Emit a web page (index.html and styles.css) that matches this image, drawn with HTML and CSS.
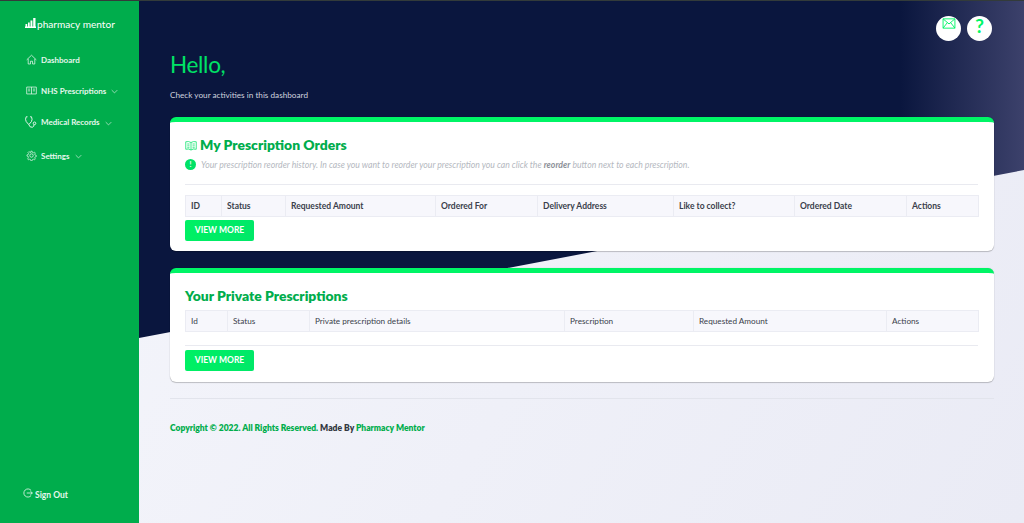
FILE: index.html
```html
<!DOCTYPE html>
<html lang="en">
<head>
<meta charset="utf-8">
<title>Pharmacy Mentor</title>
<link rel="stylesheet" href="styles.css">
</head>
<body>
<div class="app">
  <aside class="sidebar">
    <div class="logo">
      <svg class="logo-mark" viewBox="0 0 11 10"><path d="M0 8.500h11V10H0zM0.500 6h1.700v2.500H0.500zM3 4.500h1.700v4H3zM5.500 2.500h1.900v6H5.500zM8.200 0l2.300-.0V8.500H8.200z" fill="#fff"/></svg>
      <span>pharmacy mentor</span>
    </div>
    <nav class="nav">
      <a class="nav-item">
        <svg class="ico" viewBox="0 0 16 16"><path d="M1 8.500 8 1.800l7 6.700M3.200 7v7.500h3.300v-4h3v4h3.300V7"/></svg>
        <span>Dashboard</span>
      </a>
      <a class="nav-item">
        <svg class="ico" viewBox="0 0 16 16"><path d="M1 3h14v10H1zM8 3v10M3 6h3M3 8.500h3M10 6h3M10 8.500h3"/></svg>
        <span>NHS Prescriptions</span>
        <svg class="chev" viewBox="0 0 10 6"><path d="m1 1 4 4 4-4"/></svg>
      </a>
      <a class="nav-item">
        <svg class="ico ico-lg" viewBox="0 0 16 16"><path d="M4 2H2.500Q1 5 2.500 7.500L5.500 11 8.500 7.500Q10 5 8.500 2H7M5.500 11q1 3.500 4 3 2-.5 2-3"/><circle cx="12" cy="9.500" r="1.500"/></svg>
        <span>Medical Records</span>
        <svg class="chev chev-low" viewBox="0 0 10 6"><path d="m1 1 4 4 4-4"/></svg>
      </a>
      <a class="nav-item nav-item-last">
        <svg class="ico" viewBox="0 0 16 16"><circle cx="8" cy="8" r="2.500"/><path d="M7 1h2l.5 2 1.500.6 1.800-1 1.400 1.400-1 1.800.6 1.500 2 .5v2l-2 .5-.6 1.500 1 1.800-1.400 1.400-1.800-1-1.500.6-.5 2H7l-.5-2-1.500-.6-1.800 1-1.400-1.400 1-1.800L2.700 9.500l-2-.5V7l2-.5.6-1.500-1-1.800L3.700 1.800l1.800 1L7 3.100z" transform="translate(.8 .8) scale(.9)"/></svg>
        <span>Settings</span>
        <svg class="chev" viewBox="0 0 10 6"><path d="m1 1 4 4 4-4"/></svg>
      </a>
    </nav>
    <a class="signout">
      <svg class="ico-small" viewBox="0 0 16 16"><path d="M13 4A6.500 6.500 0 1 0 13 12M6 8h9M12 5.500 15 8l-3 2.500"/></svg>
      <span>Sign Out</span>
    </a>
  </aside>
  <main class="main">
    <div class="backdrop"></div>
    <div class="content">
      <div class="top-actions">
        <a class="round-btn"><svg viewBox="0 0 16 13"><path d="M1 1h14v11H1zM1 1l7 6 7-6M1 12l5-6.500M15 12l-5-6.500"/></svg></a>
        <a class="round-btn round-q">?</a>
      </div>
      <h1 class="hello">Hello,</h1>
      <p class="sub">Check your activities in this dashboard</p>

      <section class="card">
        <h2 class="card-title">
          <svg class="book" viewBox="0 0 16 14"><path d="M8 3Q5 1 1 2v10q4-1 7 1 3-2 7-1V2q-4-1-7 1zM8 3v10M3 5h3M3 7.500h3M3 10h3M10 5h3M10 7.500h3M10 10h3"/></svg>
          My Prescription Orders
        </h2>
        <p class="note">
          <span class="info">!</span>
          <span>Your prescription reorder history. In case you want to reorder your prescription you can click the <b>reorder</b> button next to each prescription.</span>
        </p>
        <hr class="rule rule-a">
        <table class="grid grid-orders">
          <colgroup>
            <col class="o1"><col class="o2"><col class="o3"><col class="o4"><col class="o5"><col class="o6"><col class="o7"><col class="o8">
          </colgroup>
          <tr><th>ID</th><th>Status</th><th>Requested Amount</th><th>Ordered For</th><th>Delivery Address</th><th>Like to collect?</th><th>Ordered Date</th><th>Actions</th></tr>
        </table>
        <a class="btn">VIEW MORE</a>
      </section>

      <section class="card card-two">
        <h2 class="card-title">Your Private Prescriptions</h2>
        <table class="grid grid-private">
          <colgroup>
            <col class="p1"><col class="p2"><col class="p3"><col class="p4"><col class="p5"><col class="p6">
          </colgroup>
          <tr><th>Id</th><th>Status</th><th>Private prescription details</th><th>Prescription</th><th>Requested Amount</th><th>Actions</th></tr>
        </table>
        <hr class="rule rule-b">
        <a class="btn">VIEW MORE</a>
      </section>

      <footer class="footer">
        <span class="green">Copyright © 2022. All Rights Reserved.</span> Made By <span class="green">Pharmacy Mentor</span>
      </footer>
    </div>
  </main>
</div>
</body>
</html>
```
FILE: styles.css
```css
* { box-sizing: border-box; }
html, body { margin: 0; height: 100%; }
body {
  font-family: "Lato", "Noto Sans", sans-serif;
  background: #eef0f7;
  color: #3a3f4b;
  overflow: hidden;
}
.app { display: flex; height: 523px; border-top: 1px solid #333b3a; }

.sidebar {
  width: 139px;
  flex: none;
  background: #00ad4c;
  color: #e6f7ed;
  display: flex;
  flex-direction: column;
  padding: 15px 0 22px 25px;
}
.logo { display: flex; align-items: flex-end; gap: 1px; color: #fff; font-size: 10.100px; font-weight: 400; height: 14px; }
.logo-mark { width: 11px; height: 10px; margin-bottom: 2px; }
.nav { display: flex; flex-direction: column; margin-top: 22px; gap: 16px; }
.nav-item { display: flex; align-items: center; height: 15px; font-size: 8px; font-weight: 700; }
.nav-item-last { margin-top: 3px; }
.ico { width: 11px; height: 11px; margin-right: 4px; margin-left: 1px; flex: none; fill: none; stroke: #e6f7ed; stroke-width: 1.100; }
.ico-lg { width: 14px; height: 14px; margin-left: -1px; margin-right: 3px; }
.chev { width: 7px; height: 5px; margin-left: 5px; margin-top: 1px; fill: none; stroke: #cdeedb; stroke-width: 1; }
.chev-low { margin-top: 4px; }
.signout { display: flex; align-items: center; margin-top: auto; font-size: 8.500px; font-weight: 700; margin-left: -2px; }
.ico-small { width: 10px; height: 10px; margin-right: 2px; margin-bottom: 3px; fill: none; stroke: #e6f7ed; stroke-width: 1.300; }

.main { flex: 1; position: relative; min-width: 0; background: linear-gradient(120deg, #f4f5fb 0%, #eaebf5 100%); }
.backdrop {
  position: absolute;
  inset: 0;
  background: linear-gradient(90deg, #0a163e 0%, #0a163e 86%, #3c416b 100%);
  clip-path: polygon(0 0, 885px 0, 885px 169px, 0 337px);
}
.content { position: relative; padding: 15px 30px 0 31px; }
.top-actions { display: flex; justify-content: flex-end; gap: 6px; margin-right: 2px; }
.round-btn {
  width: 25px; height: 25px; border-radius: 50%; background: #fff;
  display: flex; align-items: flex-start; justify-content: center;
  color: #00f566; font-weight: 700; font-size: 19px; line-height: 20px;
}
.round-btn svg { width: 14px; height: 11px; margin-top: 2px; fill: none; stroke: #00f566; stroke-width: 1.100; }
.hello { margin: 9px 0 0; font-size: 22.500px; line-height: 30px; font-weight: 400; letter-spacing: -.3px; color: #00e266; }
.sub { margin: 9px 0 0; font-size: 8.200px; line-height: 12px; font-weight: 400; color: #d0d3de; }

.card {
  margin-top: 16px;
  background: #fff;
  border-top: 5px solid #00f566;
  border-radius: 6px;
  height: 134px;
  padding: 13px 16px 0 15px;
  box-shadow: 0 1px 1px rgba(0,0,0,.2), 0 0 1px rgba(0,0,0,.25);
}
.card-two { margin-top: 17px; height: 114px; padding-top: 13px; }
.card-title { margin: 0; display: flex; align-items: center; gap: 3px; font-size: 13.900px; line-height: 20px; font-weight: 800; color: #00ad4c; }
.book { width: 12px; height: 11px; fill: none; stroke: #00e266; stroke-width: 1; }
.note { display: flex; align-items: center; gap: 5px; margin: 4px 0 0; font-size: 8.700px; line-height: 11px; font-style: italic; color: #b4b8c0; }
.note b { color: #8c9098; }
.info {
  width: 11px; height: 11px; border-radius: 50%; background: #00e266; color: #fff;
  font-size: 7px; font-style: normal; font-weight: 700; text-align: center; flex: none;
}
.rule { border: 0; height: 1px; background: #e9eaf0; margin: 0; }
.rule-a { margin-top: 14px; }
.rule-b { margin-top: 13px; }
.grid { width: 793px; margin-top: 10px; border-collapse: collapse; table-layout: fixed; font-size: 8.500px; }
.card-two .grid { margin-top: 4px; }
.grid th {
  height: 21px; padding: 0 5px; text-align: left; color: #3a3f4b;
  background: #f7f7fc; border: 1px solid #ebecf3;
}
.grid-private { font-size: 8.200px; }
.grid-private th { font-weight: 400; }
.o1 { width: 36px; } .o2 { width: 64px; } .o3 { width: 150px; } .o4 { width: 102px; }
.o5 { width: 136px; } .o6 { width: 121px; } .o7 { width: 112px; } .o8 { width: 72px; }
.p1 { width: 42px; } .p2 { width: 82px; } .p3 { width: 255px; } .p4 { width: 129px; }
.p5 { width: 193px; } .p6 { width: 92px; }
.btn {
  display: block; width: 69px; height: 21px; margin-top: 3px; border-radius: 2px;
  background: linear-gradient(90deg, #00f064, #00e868);
  color: #fff; font-size: 8.500px; font-weight: 700; line-height: 21px; text-align: center;
}
.card-two .btn { margin-top: 4px; }
.footer {
  margin-top: 16px; padding-top: 23px; border-top: 1px solid #e2e4ec;
  font-size: 8.500px; font-weight: 800; color: #33373f; line-height: 12px;
}
.green { color: #00ad4c; }
```
